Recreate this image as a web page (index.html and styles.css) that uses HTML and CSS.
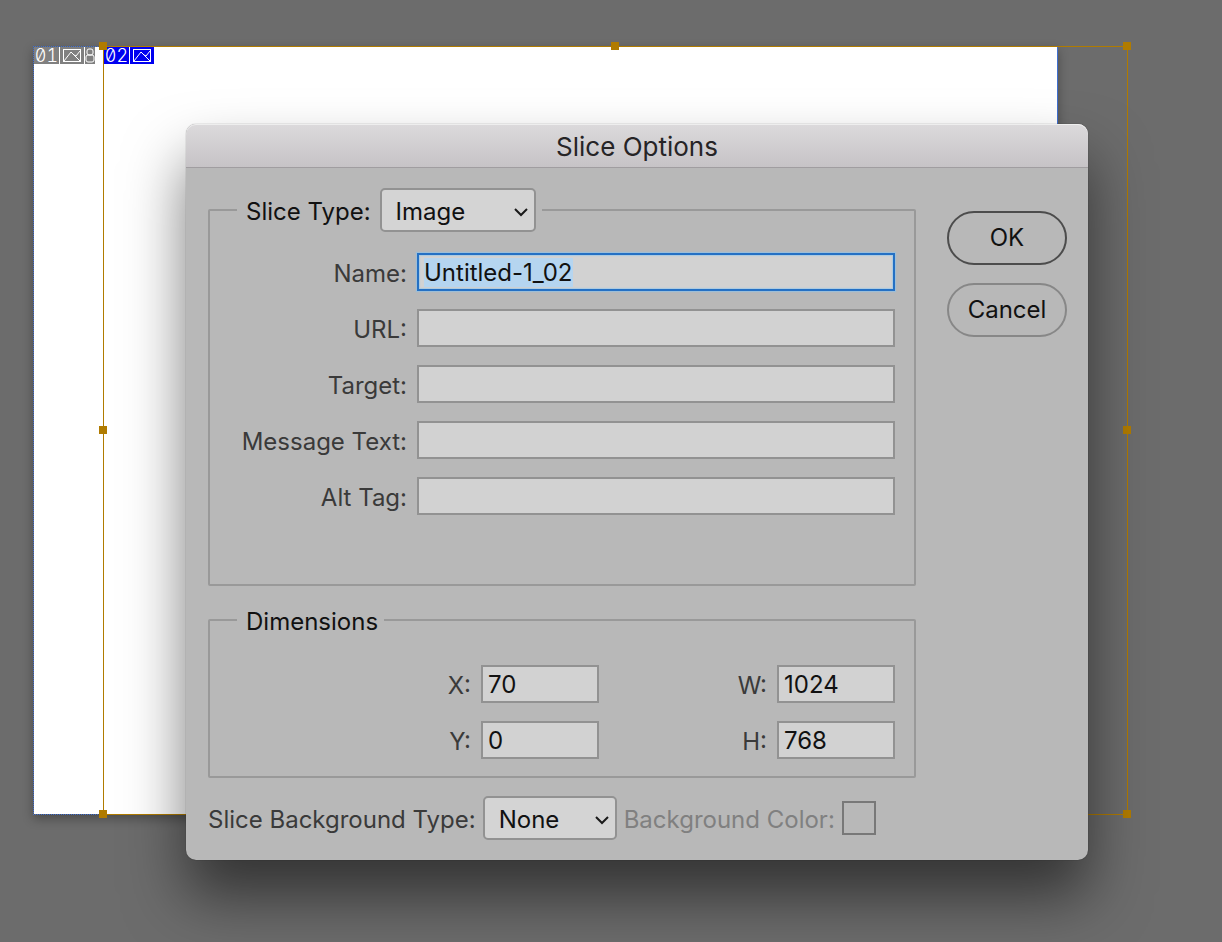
FILE: index.html
```
<!DOCTYPE html>
<html lang="en">
<head>
  <meta charset="UTF-8">
  <title>Slice Options</title>
  <link rel="stylesheet" href="styles.css">
</head>
<body>

  <main class="workspace">
    <div class="canvas"></div>

    <div class="badge badge-auto">
      <span class="badge-number">01</span>
      <svg class="badge-icon" width="24" height="17" viewBox="0 0 24 17">
        <rect x="3.5" y="2.5" width="17" height="12"/>
        <path d="M4 14l7-9 9 9M14 8l2 1 4-5"/>
      </svg>
      <svg class="badge-icon" width="10" height="17" viewBox="0 0 10 17">
        <rect x="2" y="2" width="6" height="6" rx="2"/>
        <rect x="1" y="8" width="8" height="7" rx="2"/>
      </svg>
    </div>

    <div class="selection">
      <div class="badge badge-user">
        <span class="badge-number">02</span>
        <svg class="badge-icon" width="24" height="17" viewBox="0 0 24 17">
          <rect x="3.5" y="2.5" width="17" height="12"/>
          <path d="M4 14l7-9 9 9M14 8l2 1 4-5"/>
        </svg>
      </div>
      <i class="handle top left"></i>
      <i class="handle top center"></i>
      <i class="handle top right"></i>
      <i class="handle middle left"></i>
      <i class="handle middle right"></i>
      <i class="handle bottom left"></i>
      <i class="handle bottom right"></i>
    </div>

    <form class="dialog" id="sliceForm">
      <h1 class="dialog-title">Slice Options</h1>

      <div class="dialog-body">
        <div class="settings">
          <fieldset class="group">
            <legend class="group-legend">
              <label for="sliceType">Slice Type:</label>
              <span class="dropdown">
                <select id="sliceType" class="select select-type">
                  <option>Image</option>
                  <option>No Image</option>
                  <option>Table</option>
                </select>
                <svg class="chevron" width="14" height="9" viewBox="0 0 14 9"><path d="M1 1l6 6 6-6"/></svg>
              </span>
            </legend>

            <div class="fields">
              <label for="name">Name:</label>
              <input type="text" id="name" class="field" value="Untitled-1_02" spellcheck="false" autocomplete="off">

              <label for="url">URL:</label>
              <input type="text" id="url" class="field">

              <label for="target">Target:</label>
              <input type="text" id="target" class="field">

              <label for="message">Message Text:</label>
              <input type="text" id="message" class="field">

              <label for="alt">Alt Tag:</label>
              <input type="text" id="alt" class="field">
            </div>
          </fieldset>

          <fieldset class="group group-dimensions">
            <legend class="group-legend legend-text">Dimensions</legend>

            <div class="dimensions">
              <div class="dimension">
                <label for="x">X:</label>
                <input type="text" id="x" class="field" value="70">
              </div>
              <div class="dimension">
                <label for="w">W:</label>
                <input type="text" id="w" class="field" value="1024">
              </div>
              <div class="dimension">
                <label for="y">Y:</label>
                <input type="text" id="y" class="field" value="0">
              </div>
              <div class="dimension">
                <label for="h">H:</label>
                <input type="text" id="h" class="field" value="768">
              </div>
            </div>
          </fieldset>

          <div class="background-row">
            <label for="bgType">Slice Background Type:</label>
            <span class="dropdown">
              <select id="bgType" class="select select-background">
                <option>None</option>
                <option>Matte</option>
                <option>White</option>
                <option>Black</option>
                <option>Other...</option>
              </select>
              <svg class="chevron" width="14" height="9" viewBox="0 0 14 9"><path d="M1 1l6 6 6-6"/></svg>
            </span>
            <label for="bgColor" class="disabled">Background Color:</label>
            <input type="color" id="bgColor" class="swatch" value="#b8b8b8" disabled>
          </div>
        </div>

        <div class="actions">
          <button type="submit" class="btn btn-default">OK</button>
          <button type="button" class="btn">Cancel</button>
        </div>
      </div>
    </form>
  </main>

  <script>
    // the name is ready to be typed over when the dialog opens
    const nameInput = document.getElementById("name");
    nameInput.focus();
    nameInput.select();

    document.getElementById("sliceForm").addEventListener("submit", function(e) {
      e.preventDefault();
    });
  </script>

</body>
</html>
```
FILE: styles.css
```
* {
  box-sizing: border-box;
}

body {
  margin: 0;
  background: #6c6c6c;
  color: #111;
  font-family: Inter, "Liberation Sans", sans-serif;
  font-size: 24px;
  line-height: 30px;
}

input, select, button {
  font: inherit;
  color: inherit;
}

label {
  padding-top: 3px;
}

/* artboard behind the dialog */
.workspace {
  position: relative;
  min-height: 100vh;
  overflow: hidden;
}

.canvas {
  position: absolute;
  left: 33px;
  top: 46px;
  width: 1025px;
  height: 769px;
  background: #fff;
  background-clip: padding-box;
  border: 1px dotted #3f6fd0;
  border-right-style: solid;
  box-shadow: 0 4px 10px rgba(0, 0, 0, 0.3);
}

.selection {
  position: absolute;
  left: 103px;
  top: 46px;
  width: 1025px;
  height: 769px;
  border: 1px solid #b07b00;
}

.handle {
  position: absolute;
  width: 8px;
  height: 8px;
  background: #b07b00;
}

.top { top: -5px; }
.middle { top: 379px; }
.bottom { bottom: -4px; }
.left { left: -5px; }
.center { left: 507px; }
.right { right: -4px; }

.badge {
  position: absolute;
  display: flex;
  gap: 1px;
  height: 17px;
  background: #fff;
  color: #fff;
  font-size: 18px;
  line-height: 18px;
}

.badge-auto {
  left: 34px;
  top: 47px;
}

.badge-user {
  left: 0;
  top: 0;
}

.badge-number {
  width: 25px;
  text-align: center;
  font-weight: 300;
  font-feature-settings: "zero", "tnum";
}

.badge-number, .badge-icon {
  background: #808080;
}

.badge-user .badge-number, .badge-user .badge-icon {
  background: #0000f0;
}

.badge-icon {
  fill: none;
  stroke: #fff;
}

/* dialog window */
.dialog {
  position: absolute;
  left: 186px;
  top: 124px;
  width: 902px;
  background: #b8b8b8;
  border-radius: 10px;
  box-shadow: 0 0 1px rgba(0, 0, 0, 0.6), 0 36px 60px rgba(0, 0, 0, 0.52);
}

.dialog-title {
  margin: 0;
  height: 44px;
  border-bottom: 1px solid #a09da0;
  border-radius: 10px 10px 0 0;
  background: linear-gradient(#dcdadc, #c6c3c6);
  box-shadow: inset 0 1px #eee;
  color: #262426;
  font-size: 26px;
  font-weight: 400;
  line-height: 46px;
  text-align: center;
}

.dialog-body {
  display: flex;
  gap: 31px;
  padding: 20px 21px 20px 22px;
}

.settings {
  flex: 1;
}

.group {
  margin: 0;
  padding: 21px 19px 69px 27px;
  border: 2px solid #999;
  border-radius: 2px;
}

.group-legend {
  display: flex;
  align-items: center;
  gap: 9px;
  padding: 0 6px 0 9px;
}

.legend-text {
  padding-top: 5px;
}

.group-dimensions {
  margin-top: 16px;
  padding-top: 28px;
  padding-bottom: 17px;
}

.fields {
  display: grid;
  grid-template-columns: 170px 1fr;
  gap: 18px 10px;
  align-items: center;
  text-align: right;
  color: #3a3a3a;
}

.field {
  width: 100%;
  min-width: 0;
  height: 38px;
  padding: 0 5px;
  border: 2px solid #929292;
  border-radius: 0;
  outline: none;
  background: #d2d2d2;
  color: #111;
  line-height: 34px;
}

.field:focus {
  border-color: #2470c4;
  box-shadow: 0 0 1px 1px rgba(130, 195, 245, 0.5), inset 0 0 1px 1px rgba(130, 195, 245, 0.5);
}

.field::selection {
  background: #b5d5f0;
  color: #111;
}

.dimensions {
  display: grid;
  grid-template-columns: 1fr 1fr;
  row-gap: 18px;
  padding-left: 66px;
  color: #3a3a3a;
}

.dimension {
  display: flex;
  justify-content: flex-end;
  align-items: center;
  gap: 10px;
}

.dimension .field {
  width: 118px;
}

.dropdown {
  position: relative;
  display: flex;
}

.select {
  height: 44px;
  padding: 3px 14px 0;
  border: 2px solid #929292;
  border-radius: 5px;
  background: #d4d4d4;
  color: #111;
  appearance: none;
}

.select-type {
  width: 156px;
}

.select-background {
  width: 134px;
}

.chevron {
  position: absolute;
  right: 8px;
  top: 20px;
  fill: none;
  stroke: #1a1a1a;
  stroke-width: 2;
  pointer-events: none;
}

.background-row {
  display: flex;
  align-items: center;
  gap: 7px;
  margin-top: 18px;
  color: #3a3a3a;
}

.disabled {
  color: #808080;
}

.swatch {
  width: 34px;
  height: 34px;
  padding: 0;
  border: 2px solid #787878;
  background: #b8b8b8;
  appearance: none;
}

.swatch::-webkit-color-swatch-wrapper {
  padding: 0;
}

.swatch::-webkit-color-swatch {
  border: none;
}

.actions {
  display: flex;
  flex-direction: column;
  gap: 18px;
  margin-top: 23px;
}

.btn {
  width: 120px;
  height: 54px;
  padding: 0;
  border: 2px solid #878787;
  border-radius: 27px;
  background: transparent;
  color: #111;
}

.btn-default {
  border-color: #4c4c4c;
}
```
